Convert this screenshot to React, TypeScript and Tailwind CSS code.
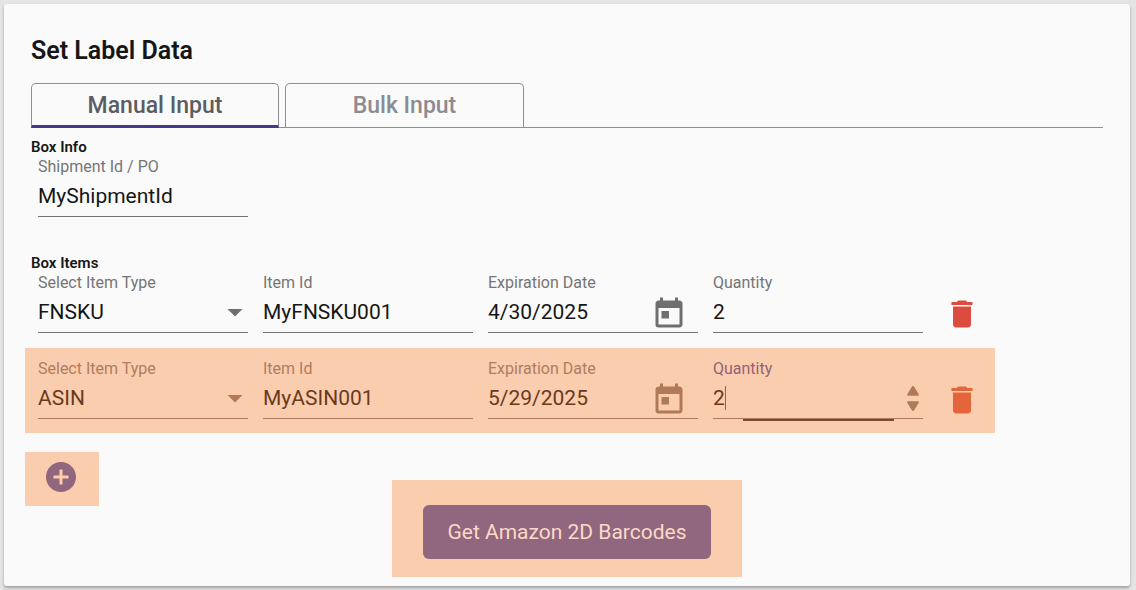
import { useId, useState } from "react";
import type { ReactNode } from "react";
import { MdAddCircle, MdArrowDropDown, MdDelete, MdToday } from "react-icons/md";

type Item = { type: string; id: string; date: string; quantity: string };

type FieldProps = {
  label: string;
  highlighted?: boolean;
  focused?: boolean;
  children: (id: string) => ReactNode;
};

function Field({ label, highlighted, focused, children }: FieldProps) {
  const id = useId();
  const labelColor = focused ? "text-[#985f78]" : highlighted ? "text-[#b17c5e]" : "text-[#757575]";
  const lineColor = highlighted ? "border-[#b07a58]" : "border-[#757575]";
  return (
    <div className={`relative flex w-[210px] flex-col border-b ${lineColor}`}>
      <label htmlFor={id} className={`text-base leading-5 ${labelColor}`}>
        {label}
      </label>
      <div className="relative flex h-[39px] items-center pb-px">{children(id)}</div>
      {focused && <div className="absolute -bottom-[3px] left-[30px] h-[2px] w-[151px] bg-[#7c4831]" />}
    </div>
  );
}

const control = "w-full min-w-0 appearance-none bg-transparent p-0 text-[21px] leading-6 outline-none";

function ItemRow({ item, highlighted }: { item: Item; highlighted?: boolean }) {
  const [value, setValue] = useState(item);
  const text = highlighted ? "text-[#6b3a1c]" : "text-[#161616]";
  const icon = highlighted ? "text-[#b07a58]" : "text-[#6f6f6f]";
  return (
    <div
      className={`-ml-[6px] flex w-fit items-start gap-[15px] pr-[15px] pl-[13px] ${
        highlighted ? "mt-[15px] bg-[#facdae] pt-[11px] pb-[14px]" : ""
      }`}
    >
      <Field label="Select Item Type" highlighted={highlighted}>
        {(id) => (
          <>
            <select
              id={id}
              value={value.type}
              onChange={(e) => setValue({ ...value, type: e.target.value })}
              className={`${control} ${text}`}
            >
              <option>FNSKU</option>
              <option>ASIN</option>
            </select>
            <MdArrowDropDown className={`pointer-events-none absolute -right-[5px] size-9 ${icon}`} />
          </>
        )}
      </Field>
      <Field label="Item Id" highlighted={highlighted}>
        {(id) => (
          <input
            id={id}
            value={value.id}
            onChange={(e) => setValue({ ...value, id: e.target.value })}
            className={`${control} ${text}`}
          />
        )}
      </Field>
      <Field label="Expiration Date" highlighted={highlighted}>
        {(id) => (
          <>
            <input
              id={id}
              value={value.date}
              onChange={(e) => setValue({ ...value, date: e.target.value })}
              className={`${control} ${text}`}
            />
            <button type="button" aria-label="Open calendar" className={`mt-1 mr-[11px] shrink-0 ${icon}`}>
              <MdToday className="size-9" />
            </button>
          </>
        )}
      </Field>
      <Field label="Quantity" highlighted={highlighted} focused={highlighted}>
        {(id) => (
          <>
            <input
              id={id}
              inputMode="numeric"
              value={value.quantity}
              onChange={(e) => setValue({ ...value, quantity: e.target.value })}
              className={`${control} ${text}`}
            />
            {highlighted && (
              <>
                <div className="absolute left-[12px] h-6 w-px bg-[#8d5a80]" />
                <div className={`flex shrink-0 flex-col gap-[5px] pr-1 ${icon}`}>
                  <button type="button" aria-label="Increase quantity">
                    <svg viewBox="0 0 12 10" className="block h-[10px] w-3" fill="currentColor">
                      <path d="M6 0Q6.8 0 7.3 1L11.6 8Q12.2 9.6 11 9.7H1Q-.2 9.6 .4 8L4.7 1Q5.2 0 6 0Z" />
                    </svg>
                  </button>
                  <button type="button" aria-label="Decrease quantity">
                    <svg viewBox="0 0 12 10" className="block h-[10px] w-3" fill="currentColor">
                      <path d="M6 10Q6.8 10 7.3 9L11.6 2Q12.2 .4 11 .3H1Q-.2 .4 .4 2L4.7 9Q5.2 10 6 10Z" />
                    </svg>
                  </button>
                </div>
              </>
            )}
          </>
        )}
      </Field>
      <button
        type="button"
        aria-label="Delete item"
        className={`mt-[23px] ml-[6px] h-9 shrink-0 ${highlighted ? "text-[#e4643b]" : "text-[#db4c3f]"}`}
      >
        <MdDelete className="size-9" />
      </button>
    </div>
  );
}

const items: Item[] = [
  { type: "FNSKU", id: "MyFNSKU001", date: "4/30/2025", quantity: "2" },
  { type: "ASIN", id: "MyASIN001", date: "5/29/2025", quantity: "2" },
];

export default function App() {
  const [shipment, setShipment] = useState("MyShipmentId");
  const [tab, setTab] = useState("manual");
  return (
    <div className="flex min-h-screen bg-[#e4e4e4] pt-1 pr-[6px] pb-1 pl-1 font-['Roboto',sans-serif]">
      <main className="flex-1 rounded-[3px] bg-[#fafafa] px-[27px] pt-[31px] pb-[9px] shadow-[0_2px_3px_rgba(0,0,0,0.3)]">
        <h1 className="text-[25px] leading-8 font-semibold text-[#161616]">Set Label Data</h1>

        <div
          role="tablist"
          className="mt-4 flex h-[45px] gap-[6px] border-b border-[#8f8f8f] text-[23px] font-medium"
        >
          <button
            type="button"
            role="tab"
            aria-selected={tab === "manual"}
            onClick={() => setTab("manual")}
            className="-mb-px w-[248px] rounded-t-[5px] border border-[#8f8f8f] border-b-[3px] border-b-[#46398c] pt-1 text-[#5c5d63]"
          >
            Manual Input
          </button>
          <button
            type="button"
            role="tab"
            aria-selected={tab === "bulk"}
            onClick={() => setTab("bulk")}
            className="w-[239px] rounded-t-[5px] border border-b-0 border-[#8f8f8f] pt-[2px] text-[#8b8c91]"
          >
            Bulk Input
          </button>
        </div>

        <section className="mt-[9px]">
          <h2 className="text-[15px] leading-5 font-semibold text-[#161616]">Box Info</h2>
          <div className="ml-[7px]">
            <Field label="Shipment Id / PO">
              {(id) => (
                <input
                  id={id}
                  value={shipment}
                  onChange={(e) => setShipment(e.target.value)}
                  className={`${control} text-[#161616]`}
                />
              )}
            </Field>
          </div>
        </section>

        <section className="mt-9">
          <h2 className="text-[15px] leading-5 font-semibold text-[#161616]">Box Items</h2>
          {items.map((item, i) => (
            <ItemRow key={item.id} item={item} highlighted={i === 1} />
          ))}
        </section>

        <div className="mt-[19px] grid grid-cols-[1fr_auto_1fr] items-start">
          <div className="-ml-[6px] flex h-[54px] w-[74px] items-start bg-[#facdae] pt-[7px] pl-[18px]">
            <button type="button" aria-label="Add item" className="text-[#91667f]">
              <MdAddCircle className="size-9" />
            </button>
          </div>
          <div className="mt-7 bg-[#facdae] px-[31px] pt-[25px] pb-[18px]">
            <button
              type="button"
              className="h-[54px] rounded-md bg-[#91667f] px-6 pt-[2px] text-[21px] text-[#fbd9c6]"
            >
              Get Amazon 2D Barcodes
            </button>
          </div>
        </div>
      </main>
    </div>
  );
}
